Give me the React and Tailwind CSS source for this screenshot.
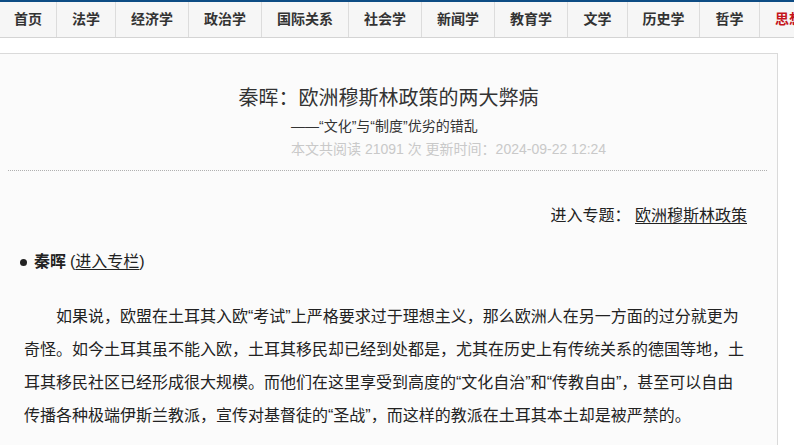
import React from "react";

const navItems = [
  { t: "首页", w: "w-[57px]" },
  { t: "法学", w: "w-[59px]" },
  { t: "经济学", w: "w-[73px]" },
  { t: "政治学", w: "w-[73px]" },
  { t: "国际关系", w: "w-[87px]" },
  { t: "社会学", w: "w-[73px]" },
  { t: "新闻学", w: "w-[73px]" },
  { t: "教育学", w: "w-[73px]" },
  { t: "文学", w: "w-[60px]" },
  { t: "历史学", w: "w-[72px]" },
  { t: "哲学", w: "w-[60px]" },
];

export default function App() {
  return (
    <div className="w-[794px] h-[445px] overflow-hidden bg-white font-['Liberation_Sans','Noto_Sans_CJK_SC',sans-serif] text-[#333]">
      <div className="h-[2px] bg-[#0d4c84]" />
      <div className="flex h-[36px] bg-[#f6f6f6] border-b border-[#d4d4d4] whitespace-nowrap">
        {navItems.map((n) => (
          <div
            key={n.t}
            className={`${n.w} shrink-0 flex items-center justify-center border-r border-[#dcdcdc] text-[14px] font-bold text-[#333]`}
          >
            {n.t}
          </div>
        ))}
        <div className="shrink-0 flex items-center pl-[15px] text-[14px] font-bold text-[#c4141b]">
          思想库
        </div>
      </div>
      <div className="h-[15px]" />
      <div className="w-[778px] h-[400px] bg-[#fbfbfb] border-t border-r border-[#dadada]">
        <div className="pt-[30px] text-center text-[20px] leading-[28px] text-[#333]">
          秦晖：欧洲穆斯林政策的两大弊病
        </div>
        <div className="mt-[4px] ml-[291px] text-[14px] leading-[20px] text-[#333]">
          ——“文化”与“制度”优劣的错乱
        </div>
        <div className="mt-[3px] ml-[291px] text-[14px] leading-[20px] text-[#c9c9c9]">
          本文共阅读 21091 次 更新时间：2024-09-22 12:24
        </div>
        <div className="mt-[11px] ml-[8px] w-[759px] border-t border-dotted border-[#b0b0b0]" />
        <div className="mt-[33px] pr-[30px] text-right text-[16px] leading-[24px] text-[#222]">
          进入专题：&nbsp;
          <span className="underline underline-offset-2">欧洲穆斯林政策</span>
        </div>
        <div className="mt-[22px] pl-[20px] flex items-center text-[16px] leading-[24px] text-[#222]">
          <span className="w-[7px] h-[7px] rounded-full bg-[#222] mr-[7px]" />
          <span className="font-bold">秦晖</span>
          <span className="ml-[4px]">
            (<span className="underline underline-offset-2">进入专栏</span>)
          </span>
        </div>
        <p className="mt-[26px] ml-[24px] w-[722px] indent-[32px] text-[16px] leading-[33px] text-[#222]">
          如果说，欧盟在土耳其入欧“考试”上严格要求过于理想主义，那么欧洲人在另一方面的过分就更为奇怪。如今土耳其虽不能入欧，土耳其移民却已经到处都是，尤其在历史上有传统关系的德国等地，土耳其移民社区已经形成很大规模。而他们在这里享受到高度的“文化自治”和“传教自由”，甚至可以自由传播各种极端伊斯兰教派，宣传对基督徒的“圣战”，而这样的教派在土耳其本土却是被严禁的。
        </p>
      </div>
    </div>
  );
}
